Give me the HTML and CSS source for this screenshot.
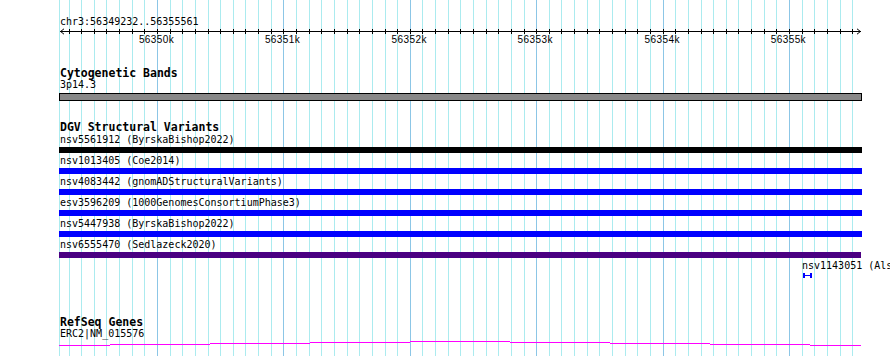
FILE: index.html
```html
<!DOCTYPE html>
<html lang="en">
<head>
<meta charset="utf-8">
<title>Genome browser</title>
<link rel="stylesheet" href="styles.css">
</head>
<body>
<div class="browser">
  <svg class="grid" width="890" height="356" viewBox="0 0 890 356" shape-rendering="crispEdges" aria-hidden="true">
    <path class="grid-minor" d="M59.5 0v356M69.5 0v356M81.5 0v356M94.5 0v356M106.5 0v356M119.5 0v356M132.5 0v356M144.5 0v356M170.5 0v356M182.5 0v356M195.5 0v356M208.5 0v356M220.5 0v356M233.5 0v356M245.5 0v356M258.5 0v356M271.5 0v356M296.5 0v356M309.5 0v356M321.5 0v356M334.5 0v356M347.5 0v356M359.5 0v356M372.5 0v356M385.5 0v356M397.5 0v356M422.5 0v356M435.5 0v356M448.5 0v356M460.5 0v356M473.5 0v356M486.5 0v356M498.5 0v356M511.5 0v356M524.5 0v356M549.5 0v356M561.5 0v356M574.5 0v356M587.5 0v356M599.5 0v356M612.5 0v356M625.5 0v356M637.5 0v356M650.5 0v356M675.5 0v356M688.5 0v356M701.5 0v356M713.5 0v356M726.5 0v356M738.5 0v356M751.5 0v356M764.5 0v356M776.5 0v356M802.5 0v356M814.5 0v356M827.5 0v356M840.5 0v356M852.5 0v356"/>
    <path class="grid-major" d="M157.5 0v356M283.5 0v356M410.5 0v356M536.5 0v356M663.5 0v356M789.5 0v356"/>
  </svg>

  <div class="tracks">
    <div class="position">chr3:56349232..56355561</div>
    <svg class="ruler" width="890" height="18" viewBox="0 0 890 18" aria-label="ruler">
      <path class="ruler-axis" shape-rendering="crispEdges" d="M60 3.5H861"/>
      <path class="ruler-arrow" d="M64 0.8L60.6 3.5L64 6.2M857 0.8L860.4 3.5L857 6.2"/>
      <path class="ruler-ticks" shape-rendering="crispEdges" d="M69.5 1v5M81.5 1v5M94.5 1v5M106.5 1v5M119.5 1v5M132.5 1v5M144.5 1v5M157.5 1v5M170.5 1v5M182.5 1v5M195.5 1v5M208.5 1v5M220.5 1v5M233.5 1v5M245.5 1v5M258.5 1v5M271.5 1v5M283.5 1v5M296.5 1v5M309.5 1v5M321.5 1v5M334.5 1v5M347.5 1v5M359.5 1v5M372.5 1v5M385.5 1v5M397.5 1v5M410.5 1v5M422.5 1v5M435.5 1v5M448.5 1v5M460.5 1v5M473.5 1v5M486.5 1v5M498.5 1v5M511.5 1v5M524.5 1v5M536.5 1v5M549.5 1v5M561.5 1v5M574.5 1v5M587.5 1v5M599.5 1v5M612.5 1v5M625.5 1v5M637.5 1v5M650.5 1v5M663.5 1v5M675.5 1v5M688.5 1v5M701.5 1v5M713.5 1v5M726.5 1v5M738.5 1v5M751.5 1v5M764.5 1v5M776.5 1v5M789.5 1v5M802.5 1v5M814.5 1v5M827.5 1v5M840.5 1v5M852.5 1v5"/>
      <g class="ruler-labels">
        <text x="156.5" y="15">56350k</text>
        <text x="282.5" y="15">56351k</text>
        <text x="409.2" y="15">56352k</text>
        <text x="535.2" y="15">56353k</text>
        <text x="662.2" y="15">56354k</text>
        <text x="788.4" y="15">56355k</text>
      </g>
    </svg>

    <section class="track track-cyto">
      <h2 class="track-title">Cytogenetic Bands</h2>
      <div class="feature-label">3p14.3</div>
      <div class="band"></div>
    </section>

    <section class="track track-dgv">
      <h2 class="track-title">DGV Structural Variants</h2>
      <div class="variant">
        <div class="feature-label">nsv5561912 (ByrskaBishop2022)</div>
        <div class="variant-bar bar-black"></div>
      </div>
      <div class="variant">
        <div class="feature-label">nsv1013405 (Coe2014)</div>
        <div class="variant-bar bar-blue"></div>
      </div>
      <div class="variant">
        <div class="feature-label">nsv4083442 (gnomADStructuralVariants)</div>
        <div class="variant-bar bar-blue"></div>
      </div>
      <div class="variant">
        <div class="feature-label">esv3596209 (1000GenomesConsortiumPhase3)</div>
        <div class="variant-bar bar-blue"></div>
      </div>
      <div class="variant">
        <div class="feature-label">nsv5447938 (ByrskaBishop2022)</div>
        <div class="variant-bar bar-blue"></div>
      </div>
      <div class="variant">
        <div class="feature-label">nsv6555470 (Sedlazeck2020)</div>
        <div class="variant-bar bar-purple"></div>
      </div>
      <div class="variant variant-small">
        <div class="feature-label small-label">nsv1143051 (Alsmadi2014)</div>
        <svg class="small-glyph" width="9" height="6" viewBox="0 0 9 6" shape-rendering="crispEdges" aria-hidden="true">
          <rect x="0" y="0" width="2" height="5"/>
          <rect x="7" y="0" width="2" height="5"/>
          <rect x="2" y="2" width="5" height="1"/>
        </svg>
      </div>
    </section>

    <section class="track track-genes">
      <h2 class="track-title">RefSeq Genes</h2>
      <div class="feature-label">ERC2|NM_015576</div>
      <svg class="gene" width="890" height="6" viewBox="0 0 890 6" shape-rendering="crispEdges" aria-hidden="true">
        <path d="M59 5.5H110M110 4.5H210M210 3.5H310M310 2.5H410M410 1.5H510M510 2.5H610M610 3.5H710M710 4.5H810M810 5.5H861"/>
      </svg>
    </div>
  </div>
</div>
</body>
</html>
```

FILE: styles.css
```css
html, body {
  margin: 0;
  padding: 0;
  background: #ffffff;
}

.browser {
  position: relative;
  width: 890px;
  height: 356px;
  overflow: hidden;
  background: #ffffff;
  color: #000000;
  font-family: "DejaVu Sans Mono", monospace;
}

.grid {
  position: absolute;
  top: 0;
  left: 0;
  display: block;
}

.grid-minor {
  stroke: #abebef;
  stroke-width: 1;
  fill: none;
}

.grid-major {
  stroke: #8cc6e6;
  stroke-width: 1;
  fill: none;
}

.tracks {
  position: relative;
  padding-top: 16px;
}

.position {
  height: 12px;
  padding-left: 60px;
  font-size: 10px;
  line-height: 12px;
  white-space: nowrap;
}

.ruler {
  display: block;
}

.ruler-axis,
.ruler-ticks,
.ruler-arrow {
  stroke: #000000;
  stroke-width: 1;
  fill: none;
}

.ruler-labels {
  font-family: "Liberation Sans", Arial, sans-serif;
  font-size: 10px;
  letter-spacing: 0.4px;
  text-anchor: middle;
  fill: #000000;
}

.track-title {
  margin: 0;
  height: 12px;
  padding-left: 60px;
  font-size: 11.5px;
  font-weight: bold;
  line-height: 12px;
  white-space: nowrap;
}

.feature-label {
  height: 12px;
  padding-left: 60px;
  font-size: 10px;
  line-height: 12px;
  white-space: nowrap;
}

.track-cyto {
  margin-top: 21px;
}

.band {
  box-sizing: border-box;
  margin-top: 2px;
  margin-left: 59px;
  width: 803px;
  height: 8px;
  border: 1px solid #000000;
  background: #888888;
}

.track-dgv {
  margin-top: 20px;
}

.variant {
  display: flex;
  flex-direction: column;
  gap: 1px;
  margin-top: 2px;
}

.variant:first-of-type {
  margin-top: 1px;
}

.variant-bar {
  margin-left: 59px;
  width: 803px;
  height: 6px;
}

.bar-black {
  background: #000000;
}

.bar-blue {
  background: #0000ff;
}

.bar-purple {
  width: 802px;
  background: #4b0082;
}

.small-label {
  padding-left: 802px;
}

.small-glyph {
  display: block;
  margin-left: 803px;
  fill: #0000ff;
}

.track-genes {
  margin-top: 37px;
}

.gene {
  display: block;
}

.gene path {
  stroke: #ff00ff;
  stroke-width: 1;
  fill: none;
}
```
